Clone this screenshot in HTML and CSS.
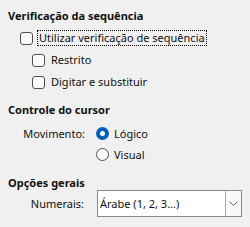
FILE: index.html
```html
<!DOCTYPE html>
<html lang="pt">
<head>
    <meta charset="UTF-8">
    <title>Layout complexo de texto</title>
    <link rel="stylesheet" href="styles.css">
</head>
<body>
    <div class="panel">
        <h2 class="group-title first">Verificação da sequência</h2>
        <label class="check row-1">
            <input type="checkbox">
            <span class="focus-text">Utilizar verificação de sequência</span>
        </label>
        <label class="check sub row-2">
            <input type="checkbox">
            <span>Restrito</span>
        </label>
        <label class="check sub row-2">
            <input type="checkbox">
            <span>Digitar e substituir</span>
        </label>

        <h2 class="group-title second">Controle do cursor</h2>
        <div class="field radio-first">
            <span class="field-label">Movimento:</span>
            <label class="radio">
                <input type="radio" name="movement" checked>
                <span>Lógico</span>
            </label>
        </div>
        <div class="field radio-second">
            <span class="field-label"></span>
            <label class="radio">
                <input type="radio" name="movement">
                <span>Visual</span>
            </label>
        </div>

        <h2 class="group-title third">Opções gerais</h2>
        <div class="field select-row">
            <span class="field-label numerals">Numerais:</span>
            <div class="combo">
                <span class="combo-value">Árabe (1, 2, 3...)</span>
                <span class="combo-btn">
                    <svg width="9" height="5" viewBox="0 0 9 5"><path d="M0.5 0.5 L4.5 4.5 L8.5 0.5" fill="none" stroke="#606060" stroke-width="1"/></svg>
                </span>
            </div>
        </div>
    </div>
</body>
</html>
```

FILE: styles.css
```css
* {
    margin: 0;
    padding: 0;
    box-sizing: border-box;
}

body {
    background: #f0f0f0;
    font-family: "Noto Sans", sans-serif;
    font-size: 11px;
    color: #111;
    width: 250px;
    height: 227px;
    overflow: hidden;
}

.panel {
    padding: 9px 0 0 8px;
    display: flex;
    flex-direction: column;
}

.group-title {
    font-size: 11px;
    font-weight: bold;
    line-height: 14px;
    height: 14px;
}

.group-title.second {
    margin-top: 13px;
}

.group-title.third {
    margin-top: 14px;
}

.check {
    display: flex;
    align-items: center;
    height: 16px;
    line-height: 16px;
}

.check.row-1 {
    margin-top: 7px;
    margin-left: 12px;
}

.check.sub {
    margin-top: 6px;
    margin-left: 24px;
}

.check input {
    appearance: none;
    width: 13px;
    height: 13px;
    border: 1px solid #4f4f4f;
    border-radius: 3px;
    background: #fbfbfb;
    margin-right: 4px;
    flex: none;
}

.check span {
    padding: 0 2px;
}

.focus-text {
    outline: 1px dotted #000;
    outline-offset: -1px;
}

.field {
    display: flex;
    align-items: center;
}

.field-label {
    width: 88px;
    flex: none;
    text-align: right;
    padding-right: 11px;
}

.field-label.numerals {
    width: 89px;
    padding-right: 13px;
}

.radio-first {
    margin-top: 8px;
    height: 16px;
}

.radio-second {
    margin-top: 5px;
    height: 16px;
}

.radio {
    display: flex;
    align-items: center;
}

.radio input {
    appearance: none;
    width: 13px;
    height: 13px;
    border: 1px solid #4f4f4f;
    border-radius: 50%;
    background: #fbfbfb;
    margin-right: 5px;
    flex: none;
}

.radio input:checked {
    border: 4px solid #005fb8;
    background: #fff;
}

.select-row {
    height: 27px;
}

.combo {
    display: flex;
    width: 145px;
    height: 27px;
    border: 1px solid #8a8a8a;
    background: #fff;
}

.combo-value {
    flex: 1;
    padding-left: 2px;
    line-height: 25px;
}

.combo-btn {
    width: 16px;
    border-left: 1px solid #b0b0b0;
    background: #f8f8f8;
    display: flex;
    align-items: center;
    justify-content: center;
}
```
